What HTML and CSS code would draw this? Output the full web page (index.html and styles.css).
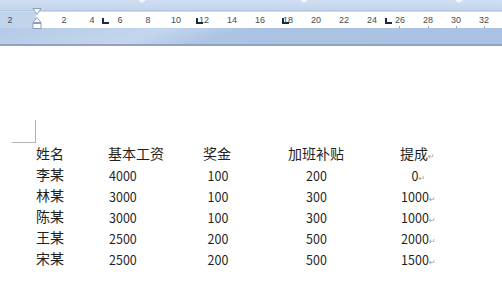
FILE: index.html
```html
<!DOCTYPE html>
<html lang="zh">
<head>
<meta charset="utf-8">
<link rel="stylesheet" href="styles.css">
</head>
<body>
<div class="ruler">
  <div class="r-top"></div>
  <div class="r-line"></div>
  <div class="r-strip">
    <div class="r-margin"><span>2</span></div>
    <div class="r-scale">
      <span>2</span><span>4</span><span>6</span><span>8</span><span>10</span><span>12</span><span>14</span><span>16</span>
      <span>18</span><span>20</span><span>22</span><span>24</span><span>26</span><span>28</span><span>30</span><span>32</span>
    </div>
  </div>
  <div class="r-bottom"></div>
  <div class="r-edge"></div>

  <span class="notch n1"></span><span class="notch n2"></span><span class="notch n3"></span>
  <svg class="indent" width="10" height="22" viewBox="0 0 10 22">
    <path d="M1 0.5 H9 L5 6.5 Z" fill="#fff" stroke="#8a9fbd" stroke-width="1"/>
    <path d="M5 9.5 L9 14.5 H1 Z" fill="#fff" stroke="#8a9fbd" stroke-width="1"/>
    <rect x="1" y="15.5" width="8" height="5" fill="#fff" stroke="#8a9fbd" stroke-width="1"/>
  </svg>
  <span class="tab t1"></span><span class="tab t2"></span><span class="tab t3"></span><span class="tab t4"></span>
  <span class="dot d1"></span><span class="dot d2"></span><span class="dot d3"></span><span class="dot d4"></span>
</div>

<div class="page">
  <div class="corner"></div>
  <div class="table">
    <div class="row">
      <span class="c1">姓名</span><span class="c2">基本工资</span><span class="c3">奖金</span><span class="c4">加班补贴</span><span class="c5">提成<i class="ret">↵</i></span>
    </div>
    <div class="row">
      <span class="c1">李某</span><span class="c2 num">4000</span><span class="c3 num">100</span><span class="c4 num">200</span><span class="c5 num">0<i class="ret">↵</i></span>
    </div>
    <div class="row">
      <span class="c1">林某</span><span class="c2 num">3000</span><span class="c3 num">100</span><span class="c4 num">300</span><span class="c5 num">1000<i class="ret">↵</i></span>
    </div>
    <div class="row">
      <span class="c1">陈某</span><span class="c2 num">3000</span><span class="c3 num">100</span><span class="c4 num">300</span><span class="c5 num">1000<i class="ret">↵</i></span>
    </div>
    <div class="row">
      <span class="c1">王某</span><span class="c2 num">2500</span><span class="c3 num">200</span><span class="c4 num">500</span><span class="c5 num">2000<i class="ret">↵</i></span>
    </div>
    <div class="row">
      <span class="c1">宋某</span><span class="c2 num">2500</span><span class="c3 num">200</span><span class="c4 num">500</span><span class="c5 num">1500<i class="ret">↵</i></span>
    </div>
  </div>
</div>
</body>
</html>
```
FILE: styles.css
```css
html, body {
  margin: 0;
  padding: 0;
  background: #fff;
}
body {
  width: 502px;
  height: 287px;
  overflow: hidden;
  font-family: "Noto Sans CJK SC", "Noto Sans", sans-serif;
  color: #1f1f1f;
}

/* ruler */
.ruler {
  position: relative;
  display: flex;
  flex-direction: column;
}
.r-top {
  height: 10px;
  background: linear-gradient(#cfdef2, #c3d5ed);
}
.r-line {
  height: 2px;
  background: linear-gradient(#a9bfdd, #dbe6f4);
}
.r-strip {
  height: 16px;
  display: flex;
  font-family: "Liberation Sans", "DejaVu Sans", sans-serif;
  font-size: 9px;
  line-height: 16px;
  color: #4a4a4a;
}
.r-margin {
  width: 36px;
  background: #c2d4ec;
  padding-left: 4px;
  box-sizing: border-box;
}
.r-margin span {
  display: inline-block;
  width: 12px;
  text-align: center;
}
.r-scale {
  flex: 1;
  background: #fff;
  display: flex;
  padding-left: 14px;
}
.r-scale span {
  width: 28px;
  flex: none;
  text-align: center;
}
.r-bottom {
  height: 16px;
  background: linear-gradient(160deg, #b5cae7 0%, #c4d6ee 30%, #adc3e4 45%, #aac1e3 100%);
}
.r-edge {
  height: 2px;
  background: linear-gradient(#8fa4c2, #9aa3ad);
}

.indent {
  position: absolute;
  left: 32px;
  top: 8px;
}
.tab {
  position: absolute;
  top: 18px;
  width: 7px;
  height: 6px;
  border-left: 2px solid #1c2a44;
  border-bottom: 2px solid #1c2a44;
  box-sizing: border-box;
}
.t1 { left: 102px; }
.t2 { left: 196px; }
.t3 { left: 282px; }
.t4 { left: 385px; }

.notch {
  position: absolute;
  top: 0;
  width: 0;
  height: 0;
  border-left: 4px solid transparent;
  border-right: 4px solid transparent;
  border-top: 3px solid #f4f8fd;
}
.n1 { left: 138px; }
.n2 { left: 300px; }
.n3 { left: 455px; }

.dot {
  position: absolute;
  top: 26px;
  width: 1px;
  height: 2px;
  background: #9aa6b5;
}
.d1 { left: 399px; }
.d2 { left: 428px; }
.d3 { left: 456px; }
.d4 { left: 484px; }

/* page */
.page {
  padding-top: 74px;
}
.corner {
  margin-left: 12px;
  width: 23px;
  height: 22px;
  border-right: 1px solid #b2b2b2;
  border-bottom: 1px solid #b2b2b2;
}
.table {
  padding-left: 36px;
  font-size: 14px;
  line-height: 21px;
}
.row {
  display: flex;
  align-items: flex-start;
  height: 21px;
  white-space: nowrap;
}
.c1 { width: 72px; }
.c2 { width: 95px; }
.c3 { width: 28px; margin-right: 57px; text-align: center; }
.c4 { width: 55px; margin-right: 57px; text-align: center; }
.c5 { width: 28px; text-align: center; }
.num {
  font-size: 12.5px;
  line-height: 19px;
  padding-top: 2px;
}
.c2.num { padding-left: 1px; }
.ret {
  font-style: normal;
  display: inline-block;
  width: 7px;
  margin-right: -7px;
  font-size: 8px;
  line-height: 8px;
  color: #9a9a9a;
  text-align: left;
  font-family: "DejaVu Sans", sans-serif;
}
```
